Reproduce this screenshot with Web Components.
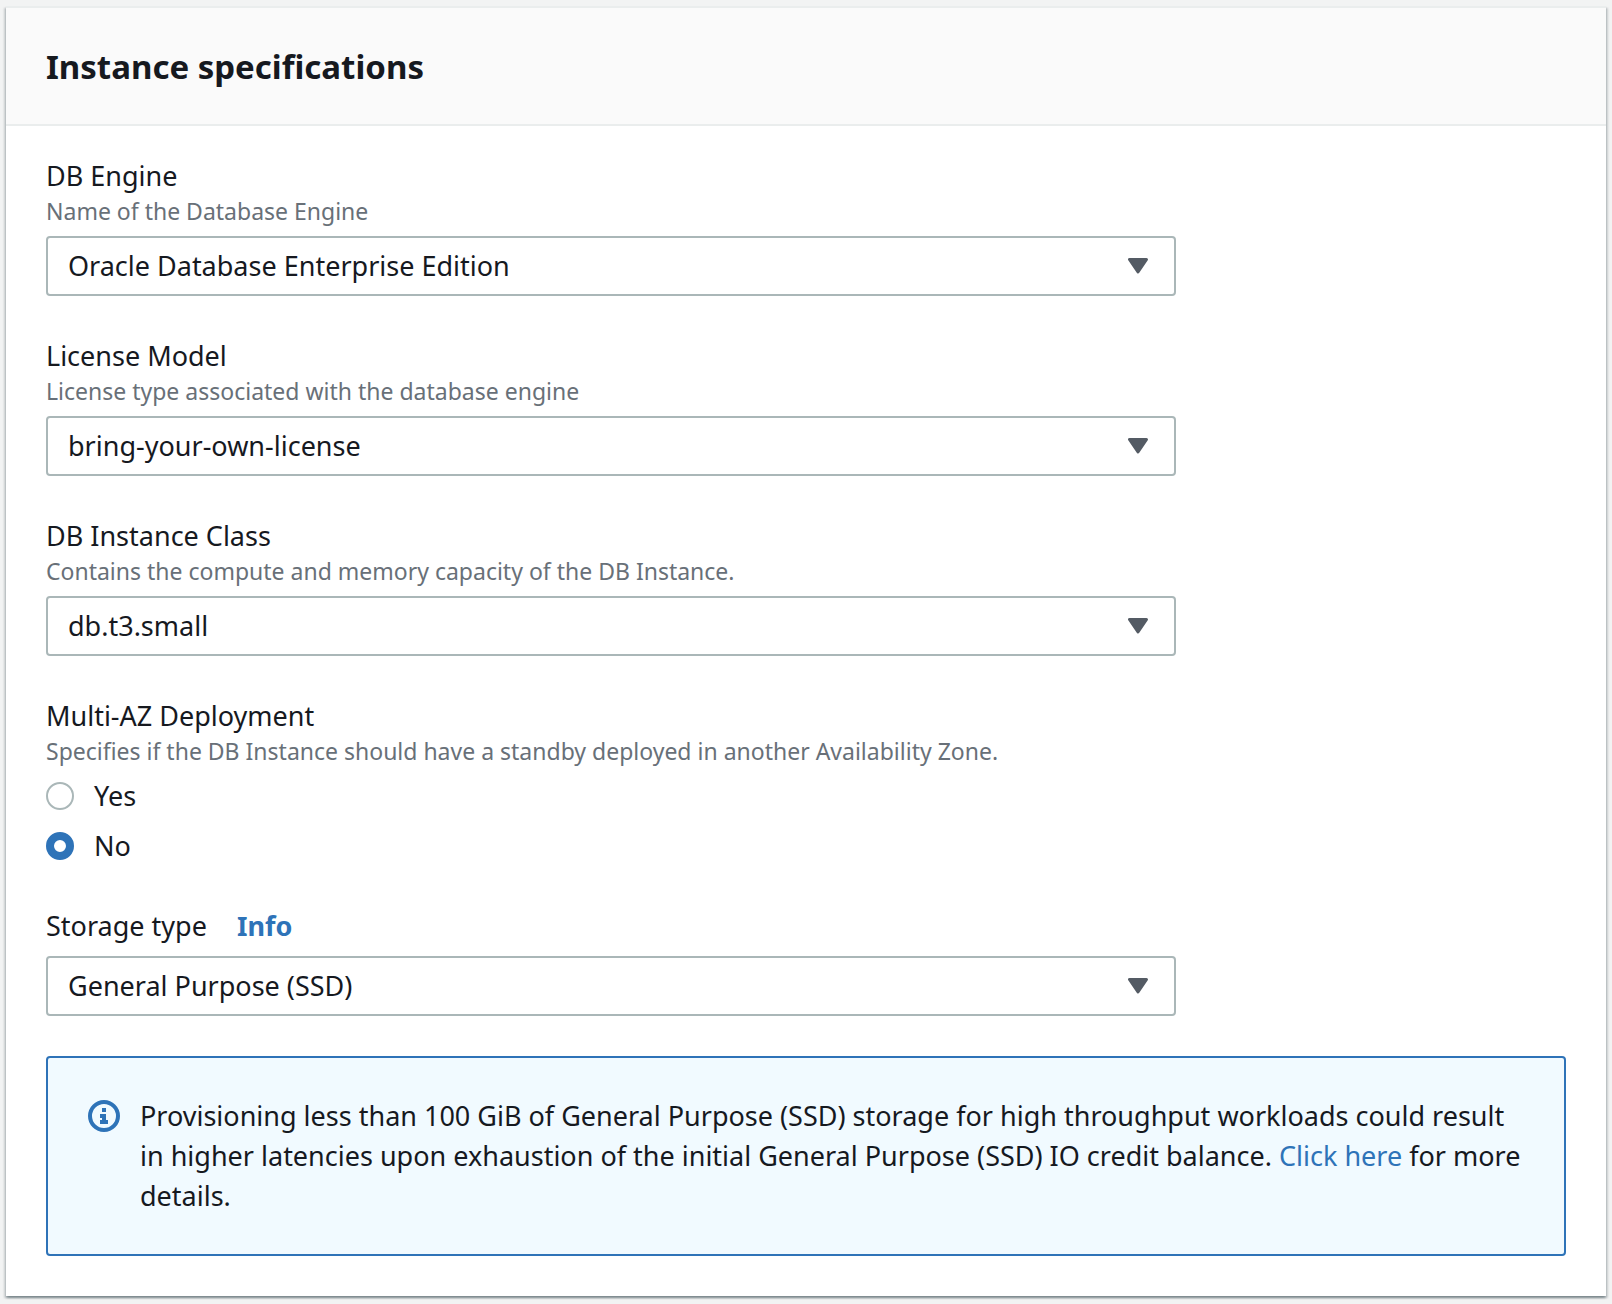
<!DOCTYPE html>
<html lang="en">
<head>
<meta charset="utf-8">
<meta name="viewport" content="width=device-width, initial-scale=1">
<title>Instance specifications</title>
<style>
  :root {
    --text: #16191f;
    --muted: #687078;
    --line: #aab7b8;
    --accent: #2e73b8;
    --arrow: #545b64;
  }
  body {
    margin: 0;
    padding: 6px;
    background: #f2f3f3;
    color: var(--text);
    font: 400 27px/40px "Noto Sans", "Open Sans", sans-serif;
  }
</style>
</head>
<body>
<form-panel heading="Instance specifications">
  <select-field label="DB Engine" description="Name of the Database Engine" options="Oracle Database Enterprise Edition"></select-field>
  <select-field label="License Model" description="License type associated with the database engine" options="bring-your-own-license"></select-field>
  <select-field label="DB Instance Class" description="Contains the compute and memory capacity of the DB Instance." options="db.t3.small"></select-field>
  <radio-field label="Multi-AZ Deployment" description="Specifies if the DB Instance should have a standby deployed in another Availability Zone." options="Yes|No" value="No"></radio-field>
  <select-field label="Storage type" options="General Purpose (SSD)"><info-link slot="info" href="#storage-type">Info</info-link></select-field>
  <info-alert>Provisioning less than 100 GiB of General Purpose (SSD) storage for high throughput workloads could result in higher latencies upon exhaustion of the initial General Purpose (SSD) IO credit balance. <text-link href="#details">Click here</text-link> for more details.</info-alert>
</form-panel>

<script>
  const render = (host, html) => {
    host.attachShadow({ mode: 'open' }).innerHTML = html;
  };

  const fieldStyles = `
    :host { display: block; width: calc(75% - 10px); }
    label, .label { display: block; }
    .description { margin: 0 0 10px; color: var(--muted); font-size: 23px; line-height: 30px; }
  `;

  class FormPanel extends HTMLElement {
    connectedCallback() {
      render(this, `
        <style>
          :host { display: block; background: #fff; border-top: 2px solid #eaeded;
            box-shadow: 0 2px 2px rgba(0, 28, 36, .3), 2px 2px 2px rgba(0, 28, 36, .15), -2px 2px 2px rgba(0, 28, 36, .15); }
          header { padding: 37px 40px 35px; background: #fafafa; border-bottom: 2px solid #eaeded; }
          h2 { margin: 0; font-size: 33px; line-height: 44px; font-weight: 700; }
          .body { display: flex; flex-direction: column; gap: 40px; padding: 30px 40px 40px; }
        </style>
        <header><h2>${this.getAttribute('heading')}</h2></header>
        <div class="body"><slot></slot></div>`);
    }
  }

  class SelectField extends HTMLElement {
    connectedCallback() {
      const description = this.getAttribute('description');
      const options = this.getAttribute('options').split('|');
      render(this, `
        <style>
          ${fieldStyles}
          .heading { display: flex; gap: 30px; }
          .heading.plain { margin-bottom: 10px; }
          .control { display: grid; align-items: center; }
          .control > * { grid-area: 1 / 1; }
          select { appearance: none; width: 100%; height: 60px; margin: 0; padding: 0 60px 0 20px;
            border: 2px solid var(--line); border-radius: 4px; background: #fff;
            color: inherit; font: inherit; }
          svg { justify-self: end; margin-right: 28px; width: 20px; height: 16px; pointer-events: none; }
        </style>
        <div class="heading ${description ? '' : 'plain'}">
          <label for="control">${this.getAttribute('label')}</label>
          <slot name="info"></slot>
        </div>
        ${description ? `<p class="description" id="description">${description}</p>` : ''}
        <div class="control">
          <select id="control" ${description ? 'aria-describedby="description"' : ''}>
            ${options.map(o => `<option>${o}</option>`).join('')}
          </select>
          <svg viewBox="0 0 20 16" aria-hidden="true"><path d="M1.5 1.5H18.5L10 14Z" fill="var(--arrow)" stroke="var(--arrow)" stroke-width="3" stroke-linejoin="round"/></svg>
        </div>`);
    }
  }

  class RadioField extends HTMLElement {
    connectedCallback() {
      const value = this.getAttribute('value');
      render(this, `
        <style>
          ${fieldStyles}
          fieldset { margin: 0; padding: 0; border: 0; min-width: 0; }
          legend { padding: 0; }
          .options { display: flex; flex-direction: column; gap: 10px; }
          .option { display: flex; align-items: center; gap: 20px; }
          input { appearance: none; box-sizing: border-box; width: 28px; height: 28px; margin: 0;
            border: 2px solid var(--line); border-radius: 50%; background: #fff; }
          input:checked { border: 8px solid var(--accent); }
        </style>
        <fieldset aria-describedby="description">
          <legend>${this.getAttribute('label')}</legend>
          <p class="description" id="description">${this.getAttribute('description')}</p>
          <div class="options">
            ${this.getAttribute('options').split('|').map((o, i) => `
              <div class="option">
                <input type="radio" name="choice" id="choice-${i}" value="${o}" ${o === value ? 'checked' : ''}>
                <label for="choice-${i}">${o}</label>
              </div>`).join('')}
          </div>
        </fieldset>`);
    }
  }

  class TextLink extends HTMLElement {
    connectedCallback() {
      render(this, `<style>
          :host { display: inline; }
          a { color: var(--accent); text-decoration: none; }
          a:hover { text-decoration: underline; }
        </style><a href="${this.getAttribute('href')}"><slot></slot></a>`);
    }
  }

  class InfoLink extends TextLink {
    connectedCallback() {
      super.connectedCallback();
      this.style.fontWeight = '700';
    }
  }

  class InfoAlert extends HTMLElement {
    connectedCallback() {
      render(this, `
        <style>
          :host { display: flex; align-items: flex-start; gap: 20px; padding: 38px 40px;
            border: 2px solid var(--accent); border-radius: 4px; background: #f1faff; }
          svg { flex: none; width: 32px; height: 32px; margin-top: 4px; }
          .message { flex: 1; min-width: 0; }
        </style>
        <svg viewBox="0 0 32 32" aria-hidden="true">
          <circle cx="16" cy="16" r="14" fill="none" stroke="var(--accent)" stroke-width="4"/>
          <path d="M14 8H18V12H14ZM12 14H18V20H20V24H12V20H14V18H12Z" fill="var(--accent)"/>
        </svg>
        <div class="message" role="status"><slot></slot></div>`);
    }
  }

  customElements.define('form-panel', FormPanel);
  customElements.define('select-field', SelectField);
  customElements.define('radio-field', RadioField);
  customElements.define('text-link', TextLink);
  customElements.define('info-link', InfoLink);
  customElements.define('info-alert', InfoAlert);
</script>
</body>
</html>
